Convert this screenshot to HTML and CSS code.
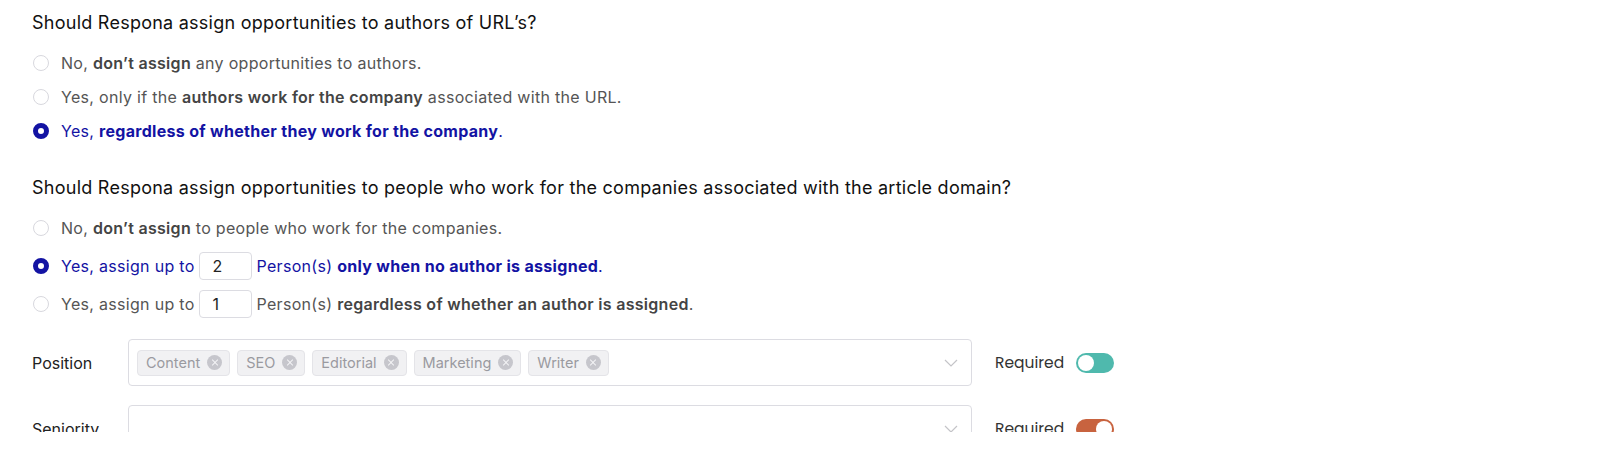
FILE: index.html
```html
<!DOCTYPE html>
<html>
<head>
<meta charset="utf-8">
<link rel="stylesheet" href="styles.css">
</head>
<body>
<div class="page">
  <section class="question">
    <h2 class="q-title">Should Respona assign opportunities to authors of URL’s?</h2>
    <div class="options">
      <label class="opt"><span class="radio"></span><span>No, <b>don’t assign</b> any opportunities to authors.</span></label>
      <label class="opt"><span class="radio"></span><span>Yes, only if the <b>authors work for the company</b> associated with the URL.</span></label>
      <label class="opt sel"><span class="radio"></span><span>Yes, <b>regardless of whether they work for the company</b>.</span></label>
    </div>
  </section>
  <section class="question q2">
    <h2 class="q-title">Should Respona assign opportunities to people who work for the companies associated with the article domain?</h2>
    <div class="options tall">
      <label class="opt"><span class="radio"></span><span>No, <b>don’t assign</b> to people who work for the companies.</span></label>
      <label class="opt sel"><span class="radio"></span><span>Yes, assign up to</span><span class="num">2</span><span>Person(s) <b>only when no author is assigned</b>.</span></label>
      <label class="opt"><span class="radio"></span><span>Yes, assign up to</span><span class="num">1</span><span>Person(s) <b>regardless of whether an author is assigned</b>.</span></label>
    </div>
  </section>
  <div class="field-row">
    <div class="f-label">Position</div>
    <div class="select">
      <div class="chips">
        <span class="chip">Content<i class="x"></i></span>
        <span class="chip">SEO<i class="x"></i></span>
        <span class="chip">Editorial<i class="x"></i></span>
        <span class="chip">Marketing<i class="x"></i></span>
        <span class="chip">Writer<i class="x"></i></span>
      </div>
      <svg class="chev" width="14" height="8" viewBox="0 0 14 8"><path d="M1 1l6 6 6-6" fill="none" stroke="#c4c4c8" stroke-width="1.2"/></svg>
    </div>
    <div class="req">Required<span class="toggle teal"><span class="knob"></span></span></div>
  </div>
  <div class="field-row">
    <div class="f-label">Seniority</div>
    <div class="select">
      <div class="chips"></div>
      <svg class="chev" width="14" height="8" viewBox="0 0 14 8"><path d="M1 1l6 6 6-6" fill="none" stroke="#c4c4c8" stroke-width="1.2"/></svg>
    </div>
    <div class="req">Required<span class="toggle orange"><span class="knob"></span></span></div>
  </div>
</div>
</body>
</html>
```
FILE: styles.css
```css
html, body { margin: 0; padding: 0; background: #fff; }
body { font-family: Inter, "Noto Sans", sans-serif; color: #333; }
.page { height: 432px; overflow: hidden; padding: 10px 0 0 32px; box-sizing: border-box; }
.q-title { margin: 0; font-size: 18px; font-weight: 400; color: #111; line-height: 26px; letter-spacing: 0.25px; }
.options { display: flex; flex-direction: column; margin-top: 10px; }
.opt { display: flex; align-items: center; height: 34px; font-size: 16px; letter-spacing: 0.3px; color: #555; }
.opt b { color: #444; font-weight: 600; }
.options.tall .opt { height: 38px; }
.radio { width: 14px; height: 14px; border: 1px solid #d8d8de; border-radius: 50%; margin: 0 12px 0 1px; box-sizing: content-box; flex: none; }
.opt.sel { color: #1313a3; }
.opt.sel b { color: #1313a3; font-weight: 700; }
.opt.sel .radio { width: 6px; height: 6px; border: 5px solid #1313a3; }
.num { display: inline-flex; align-items: center; width: 53px; height: 28px; box-sizing: border-box; border: 1px solid #dcdce2; border-radius: 4px; margin: 0 5px 0 4px; padding-left: 13px; color: #222; font-size: 16px; }
.q2 { margin-top: 27px; }
.q2 .options { margin-top: 8px; }
.field-row { display: flex; align-items: center; margin-top: 16px; }
.field-row + .field-row { margin-top: 19px; }
.f-label { width: 96px; font-size: 16px; color: #222; flex: none; }
.select { width: 844px; height: 47px; box-sizing: border-box; border: 1px solid #dcdce2; border-radius: 4px; display: flex; align-items: center; padding: 0 13px 0 8px; flex: none; }
.chips { display: flex; gap: 7px; flex: 1; }
.chip { display: inline-flex; align-items: center; height: 26px; box-sizing: border-box; padding: 0 7px 0 8px; background: #f1f1f3; border: 1px solid #e4e4e8; border-radius: 4px; color: #9a9aa0; font-size: 14.5px; }
.x { width: 15px; height: 15px; border-radius: 50%; background: #c6c6cc; margin-left: 7px; position: relative; display: inline-block; }
.x::before, .x::after { content: ""; position: absolute; left: 3.5px; top: 7px; width: 8px; height: 1px; background: #f4f4f6; transform: rotate(45deg); }
.x::after { transform: rotate(-45deg); }
.chev { flex: none; }
.req { display: flex; align-items: center; margin-left: 23px; font-family: Poppins, "Open Sans", sans-serif; font-size: 15.5px; color: #333; }
.toggle { width: 38px; height: 20px; border-radius: 10px; margin-left: 12px; box-sizing: border-box; padding: 2px; display: flex; }
.toggle .knob { width: 16px; height: 16px; border-radius: 50%; background: #fff; }
.toggle.teal { background: #4fb9ad; }
.toggle.orange { background: #c8633f; justify-content: flex-end; }
```
